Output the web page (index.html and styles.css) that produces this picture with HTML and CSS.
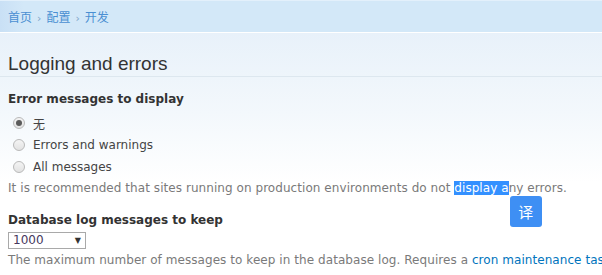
FILE: index.html
```
<!DOCTYPE html>
<html lang="zh-CN">
<head>
    <meta charset="UTF-8">
    <title>Logging and errors</title>
    <link rel="stylesheet" href="styles.css">
</head>
<body>

    <!-- Breadcrumb bar -->
    <div class="breadcrumb">
        <a href="#">首页</a><span class="sep">›</span><a href="#">配置</a><span class="sep">›</span><a href="#">开发</a>
    </div>

    <div class="page">
        <h1 class="page-title">Logging and errors</h1>

        <div class="content">
            <div class="form-item">
                <label class="form-label">Error messages to display</label>
                <div class="radios">
                    <div class="radio checked"><span class="radio-dot"></span><span>无</span></div>
                    <div class="radio"><span class="radio-dot"></span><span>Errors and warnings</span></div>
                    <div class="radio"><span class="radio-dot"></span><span>All messages</span></div>
                </div>
                <p class="description">It is recommended that sites running on production environments do not <span class="selection">display a<span class="translate-btn">译</span></span>ny errors.</p>
            </div>

            <div class="form-item form-item-select">
                <label class="form-label">Database log messages to keep</label>
                <div class="select">
                    <span>1000</span>
                    <span class="arrow">▼</span>
                </div>
                <p class="description">The maximum number of messages to keep in the database log. Requires a <a href="#">cron maintenance task</a>.</p>
            </div>
        </div>
    </div>

</body>
</html>
```

FILE: styles.css
```
/* Reset */
* {
    margin: 0;
    padding: 0;
    box-sizing: border-box;
}

body {
    font-family: 'DejaVu Sans', Verdana, 'Noto Sans CJK SC', sans-serif;
    font-size: 12px;
    color: #444;
    background: #fff;
    overflow: hidden;
}

a {
    color: #0074bd;
    text-decoration: none;
}

/* Breadcrumb */
.breadcrumb {
    height: 33px;
    padding: 0 8px;
    line-height: 31px;
    font-family: 'Noto Sans CJK SC', sans-serif;
    font-size: 12px;
    background: linear-gradient(90deg, #c9e0f5 0%, #d3e8f8 4%, #d3e8f8 100%);
    border-top: 1px solid #e3f0fb;
    border-bottom: 1px solid #ffffff;
}

.breadcrumb a {
    color: #4a8fd2;
}

.breadcrumb .sep {
    color: #7fa6c9;
    margin: 0 5px;
    font-family: 'DejaVu Sans', sans-serif;
    font-size: 11px;
}

/* Page */
.page {
    background: linear-gradient(180deg, #e8f1fa 0px, #f3f8fc 80px, #ffffff 150px);
    min-height: 242px;
}

.page-title {
    font-family: 'Liberation Sans', Arial, sans-serif;
    font-size: 19px;
    font-weight: normal;
    color: #333;
    line-height: 24px;
    padding: 19px 8px 0;
    border-bottom: 1px solid #dde7ef;
}

.content {
    padding: 14px 8px 0;
}

.form-label {
    display: block;
    font-weight: bold;
    color: #333;
    line-height: 16px;
}

.radios {
    margin-top: 5px;
}

.radio {
    display: flex;
    align-items: center;
    height: 22px;
    gap: 8px;
    padding-left: 5px;
    color: #444;
}

.radio-dot {
    width: 12px;
    height: 12px;
    border-radius: 50%;
    border: 1px solid #b9b9b9;
    background: linear-gradient(180deg, #f4f4f4, #e2e2e2);
    display: flex;
    align-items: center;
    justify-content: center;
}

.radio.checked .radio-dot::after {
    content: '';
    width: 6px;
    height: 6px;
    border-radius: 50%;
    background: #5a5a5a;
}

.description {
    color: #7a7a7a;
    line-height: 16px;
    margin-top: 2px;
    white-space: nowrap;
    letter-spacing: 0.06px;
}

.selection {
    position: relative;
    background: #3390ff;
    color: #fff;
}

/* Translate popup sits just under the selection */
.translate-btn {
    position: absolute;
    left: calc(100% + 1px);
    top: calc(100% + 1px);
    width: 32px;
    height: 31px;
    border-radius: 3px;
    background: #3e8ff4;
    color: #fff;
    font-family: 'Noto Sans CJK SC', sans-serif;
    font-size: 15px;
    line-height: 31px;
    text-align: center;
    letter-spacing: 0;
}

.form-item-select {
    margin-top: 16px;
}

.select {
    display: flex;
    justify-content: space-between;
    align-items: center;
    width: 78px;
    height: 17px;
    margin-top: 4px;
    padding: 0 4px 0 4px;
    border: 1px solid #a9a9a9;
    background: #fff;
    color: #46385e;
    line-height: 15px;
}

.select .arrow {
    font-size: 8px;
    color: #333;
}

.form-item-select .description {
    margin-top: 3px;
}
```
